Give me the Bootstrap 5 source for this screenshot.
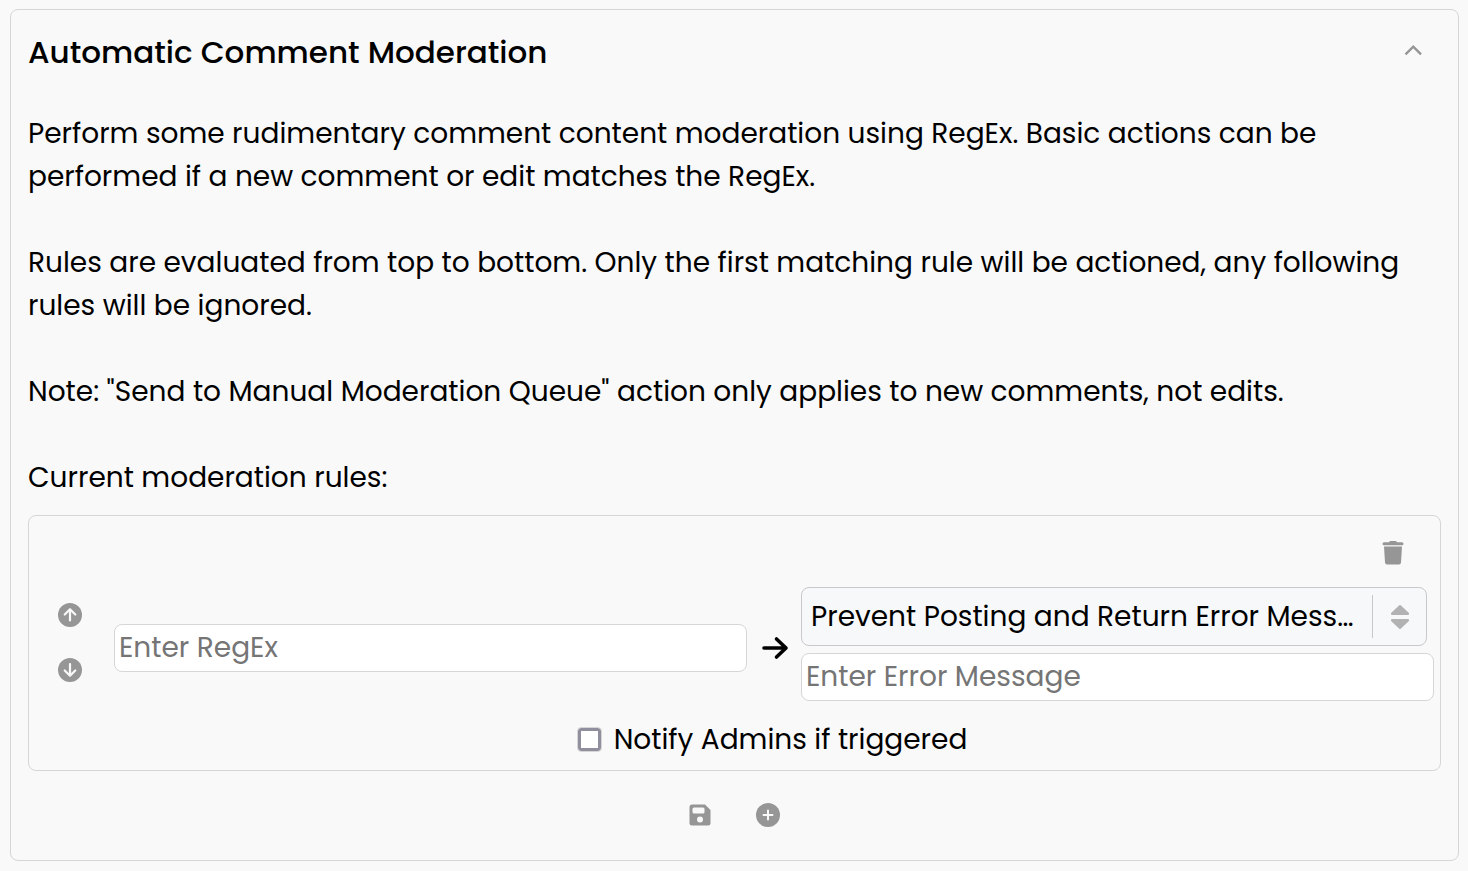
<!DOCTYPE html>
<html lang="en">
<head>
<meta charset="utf-8">
<meta name="viewport" content="width=device-width, initial-scale=1">
<title>Automatic Comment Moderation</title>
<link href="https://cdn.jsdelivr.net/npm/bootstrap@5.3.0/dist/css/bootstrap.min.css" rel="stylesheet">
<style>
  body { background: #f9f9f9; color: #000; font-family: Poppins, Inter, sans-serif; font-size: 28px; line-height: 43px; }
  .panel { --bs-card-bg: #f9f9f9; --bs-card-border-color: #d6d6d6; --bs-card-border-radius: 8px; color: #000; }
  .outer { margin: 9px 9px 10px 10px; padding: 21px 17px 33px; }
  .panel-title { font-size: 31px; font-weight: 500; line-height: 43px; }
  .intro { margin: 38px 0 16px; }
  .icon-btn { border: 0; background: none; padding: 0; color: #969696; display: flex; }
  .rule { padding: 25px 6px 9px 29px; }
  .trash { margin: 0 30px 22px 0; }
  .text-box { background: #fff; border: 1px solid #d6d6d6; border-radius: 8px; color: #000; padding: 0 4px; height: 48px; font-size: 28px; line-height: 46px; }
  .text-box::placeholder { color: #757575; }
  .movers { gap: 31px; margin-right: 32px; margin-bottom: 4px; }
  .action { margin: 0 7px 7px 0; }
  .action select { height: 59px; padding: 0 56px 0 9px; border: 1px solid #c8c8cc; border-radius: 8px; background: #f7f8fa; color: #000; font-size: 28px; line-height: 57px; }
  .picker { top: 8px; right: 0; bottom: 8px; width: 55px; border-left: 1px solid #c8c8cc; pointer-events: none; color: #b2b2b2; }
  .tick { appearance: none; width: 23px; height: 23px; margin: 0; background: #fff; border: 3px solid #8f8f9d; border-radius: 3px; outline: 1px solid #d6d6d6; }
  .tick:checked { background: #8f8f9d; }
  .notify { gap: 13px; margin-top: 17px; padding-left: 56px; padding-right: 3px; }
  .tools { gap: 44px; margin-top: 32px; padding-right: 2px; }
</style>
</head>
<body>
<main class="card panel outer">
  <header class="d-flex justify-content-between align-items-center">
    <h1 class="panel-title m-0">Automatic Comment Moderation</h1>
    <button class="icon-btn me-3" type="button" aria-label="Collapse">
      <svg width="24" height="24" viewBox="0 0 24 24" fill="none" stroke="currentColor" stroke-width="2.400" aria-hidden="true"><path d="M4.500 13.300 12.300 5.700l7.700 7.600"/></svg>
    </button>
  </header>
  <div class="intro">
    Perform some rudimentary comment content moderation using RegEx. Basic actions can be<br>
    performed if a new comment or edit matches the RegEx.<br><br>
    Rules are evaluated from top to bottom. Only the first matching rule will be actioned, any following<br>
    rules will be ignored.<br><br>
    Note: "Send to Manual Moderation Queue" action only applies to new comments, not edits.<br><br>
    Current moderation rules:
  </div>
  <section class="card panel rule">
    <div class="d-flex justify-content-end">
      <button class="icon-btn trash" type="button" aria-label="Delete rule">
        <svg width="22" height="24" viewBox="0 0 22 24" fill="currentColor" aria-hidden="true"><path d="M7 1.200 8 0h6l1 1.200h5q1.500 0 1.500 1.500T20 4.200H2Q.5 4.200.5 2.700T2 1.200zM2 5.500h18l-1 16q-.2 2-2 2H5q-1.800 0-2-2z"/></svg>
      </button>
    </div>
    <div class="d-flex align-items-center">
      <div class="movers d-flex flex-column">
        <button class="icon-btn" type="button" aria-label="Move up">
          <svg width="24" height="24" viewBox="0 0 24 24" aria-hidden="true"><circle cx="12" cy="12" r="12" fill="currentColor"/><path d="M12 17.500V6.500M6.700 11.500 12 6.200l5.300 5.300" fill="none" stroke="#f9f9f9" stroke-width="2.200" stroke-linecap="round" stroke-linejoin="round"/></svg>
        </button>
        <button class="icon-btn" type="button" aria-label="Move down">
          <svg width="24" height="24" viewBox="0 0 24 24" aria-hidden="true"><circle cx="12" cy="12" r="12" fill="currentColor"/><path d="M12 6v11.500M6.700 12.500 12 17.800l5.300-5.300" fill="none" stroke="#f9f9f9" stroke-width="2.200" stroke-linecap="round" stroke-linejoin="round"/></svg>
        </button>
      </div>
      <div class="flex-fill w-50 pt-2">
        <input class="text-box w-100 d-block" type="text" placeholder="Enter RegEx" aria-label="RegEx">
      </div>
      <svg class="flex-shrink-0 mx-3 mt-2" width="22" height="22" viewBox="0 0 22 22" overflow="visible" fill="none" stroke="#000" stroke-width="3.600" stroke-linecap="round" stroke-linejoin="round" aria-hidden="true"><path d="M1 11h22M13.500 2l9.500 9-9.500 9"/></svg>
      <div class="flex-fill w-50">
        <div class="action position-relative">
          <select class="form-select w-100 d-block" aria-label="Action"><option>Prevent Posting and Return Error Mess…</option><option>Send to Manual Moderation Queue</option></select>
          <span class="picker position-absolute d-flex align-items-center justify-content-center">
            <svg width="18" height="26" viewBox="0 0 18 26" fill="currentColor" stroke="currentColor" stroke-width="2" stroke-linejoin="round" aria-hidden="true"><path d="M9 2 1 9.500v.5h16v-.5zM9 24l-8-7.500V16h16v.5z"/></svg>
          </span>
        </div>
        <input class="text-box w-100 d-block" type="text" placeholder="Enter Error Message" aria-label="Error message">
      </div>
    </div>
    <div class="notify d-flex align-items-center justify-content-center">
      <input class="tick" type="checkbox" id="notify">
      <label for="notify">Notify Admins if triggered</label>
    </div>
  </section>
  <div class="tools d-flex justify-content-center align-items-center">
    <button class="icon-btn" type="button" aria-label="Save">
      <svg width="24" height="24" viewBox="0 0 24 24" aria-hidden="true"><path fill="currentColor" fill-rule="evenodd" d="M4 1.500h13l5.500 5.500v13q0 2.500-2.500 2.500H4Q1.500 22.500 1.500 20V4Q1.500 1.500 4 1.500zM6 4.500q-1.500 0-1.500 1.500v3q0 1.500 1.500 1.500h9q1.500 0 1.500-1.500V6q0-1.500-1.500-1.500zM12 13.500a3 3 0 1 0 0 6 3 3 0 0 0 0-6z"/></svg>
    </button>
    <button class="icon-btn" type="button" aria-label="Add rule">
      <svg width="24" height="24" viewBox="0 0 24 24" aria-hidden="true"><circle cx="12" cy="12" r="12" fill="currentColor"/><path d="M12 7.500v9M7.500 12h9" stroke="#f9f9f9" stroke-width="2" stroke-linecap="round"/></svg>
    </button>
  </div>
</main>
<script src="https://cdn.jsdelivr.net/npm/bootstrap@5.3.0/dist/js/bootstrap.bundle.min.js"></script>
</body>
</html>
